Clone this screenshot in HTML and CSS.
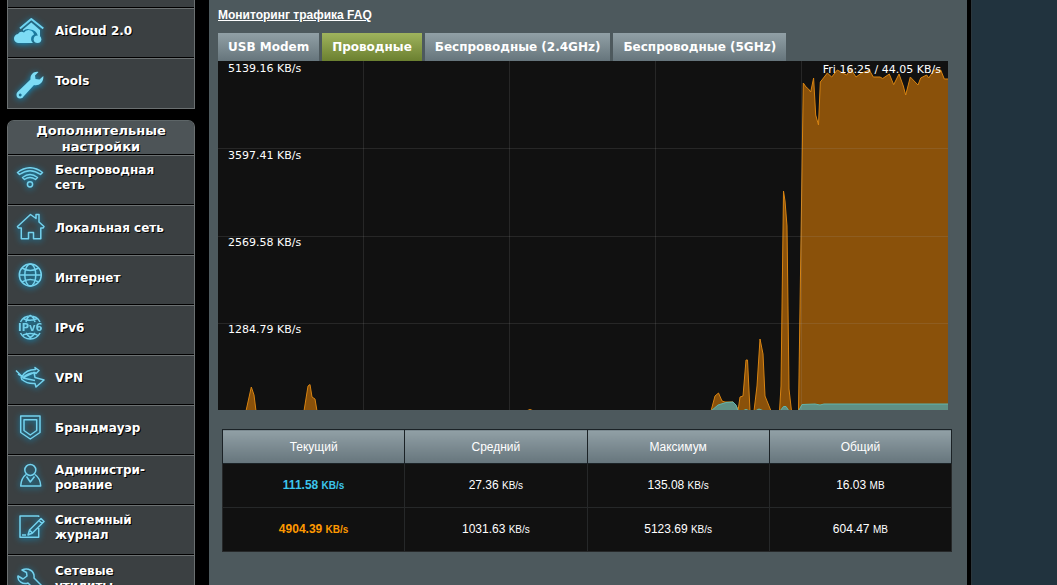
FILE: index.html
```html
<!DOCTYPE html>
<html lang="ru">
<head>
<meta charset="utf-8">
<title>Мониторинг трафика</title>
<link rel="stylesheet" href="styles.css">
</head>
<body>
<div class="frame">
  <nav class="sidebar">
    <div class="menu">
      <div class="menu-stub"></div>
      <a class="menu-item" href="#"><svg class="icon solid" viewBox="0 0 47 48"><path class="line" stroke-width="2" d="M12 19.500 23.300 10 35.300 19.500"/><path d="M15 20.500 23.300 13.500 32 21V27H30Q28 20.500 22 20.500 18.500 19 15 22Z"/><path d="M11 34A4.500 4.500 0 0 1 10 25 4.500 4.500 0 0 1 16 23.500 5.500 5.500 0 0 1 26 25.500 5 5 0 0 0 25 34Z"/><circle cx="29.500" cy="30.300" r="3.800"/></svg><span>AiCloud 2.0</span></a>
      <a class="menu-item" href="#"><svg class="icon solid" viewBox="0 0 47 48"><path fill-rule="evenodd" d="M30.500 12C26 11 22 14.500 22.500 19.500L9.500 32C7.500 34 8.500 38.500 12 38.500 14 38.500 15 37.500 15.500 36.500L26 25C31 26 36 22.500 35.300 16L31.500 19.500 27.500 19 27 15.500ZM12.200 33.600a1.400 1.400 0 1 0 .01 0Z"/></svg><span>Tools</span></a>
    </div>
    <div class="menu">
      <h2 class="menu-title">Дополнительные настройки</h2>
      <a class="menu-item" href="#"><svg class="icon" viewBox="0 0 47 48"><path d="M9.500 16.500Q22 7 34.500 16.500L32.500 18.500Q22 11 11.500 18.500Z"/><path d="M14.500 21.500Q22 15.500 29.500 21.500L27.500 23.500Q22 19.500 16.500 23.500Z"/><circle cx="22" cy="28.300" r="2.600"/></svg><span>Беспроводная сеть</span></a>
      <a class="menu-item" href="#"><svg class="icon" viewBox="0 0 47 48"><path d="M28 12.500V8.500H31V16L36 20.500 35 22H32.800V32.700H25.500V26.500H20.500V32.700H13.300V22H10.500L9.500 20.500 22.500 8.500Z"/></svg><span>Локальная сеть</span></a>
      <a class="menu-item" href="#"><svg class="icon" viewBox="0 0 47 48"><circle cx="22.300" cy="19" r="11"/><ellipse cx="22.300" cy="19" rx="5.500" ry="11"/><path d="M11.300 19H33.300M14 12Q22.300 17 30.500 12M14 26Q22.300 21 30.500 26"/></svg><span>Интернет</span></a>
      <a class="menu-item" href="#"><svg class="icon" viewBox="0 0 47 48"><path d="M12.500 16A11 11 0 0 1 32 16M18 16Q19 11 22.300 9.500 26 11 27 16M15 12.500Q22 16 29.500 12.500M12.500 27A11 11 0 0 0 32 27M18 27Q20 30 22.300 31.500 25 30 27 27M15 29Q22 26 29.500 29"/><text x="10" y="25">IPv6</text></svg><span>IPv6</span></a>
      <a class="menu-item" href="#"><svg class="icon" viewBox="0 0 47 48"><path d="M8 14.500 14 20.500Q18 13.500 27.500 13.500L27 11.500 31 14.500 28 17.500 27 16.500Q20 17 15 21.500L26 16.500 27 21.500 36 24 28 31 27 27.500Q19 28 14 23.500M15 22 27 24.500M14 24 13 20.500M10 18 17 22"/></svg><span>VPN</span></a>
      <a class="menu-item" href="#"><svg class="icon" viewBox="0 0 47 48"><path d="M12.700 10H32V26.500L22.300 33 12.700 26.500ZM16 13.800H28.700V24.500L22.300 29 16 24.500Z"/></svg><span>Брандмауэр</span></a>
      <a class="menu-item" href="#"><svg class="icon" viewBox="0 0 47 48"><circle cx="22.300" cy="14" r="5.500"/><path d="M18 18.500C14.500 21 13 25 12.700 30H32.700C32.500 25 30.500 21 27 18.500M18.500 20.500 22.300 26 26.500 20.500"/></svg><span>Администри-<br>рование</span></a>
      <a class="menu-item" href="#"><svg class="icon" viewBox="0 0 47 48"><path d="M30.700 11V10H12V31.300H30.700V22M20 29 21.500 24 33 12.500 36 15.500 24.500 27ZM31 14.500 34 17.500M21.500 24 24.500 27M14 29H18"/></svg><span>Системный<br>журнал</span></a>
      <a class="menu-item" href="#"><svg class="icon" viewBox="0 0 47 48"><path d="M14 13C20 10 27 14 26 21L34 29C38 34 32 38 28 34L20 26C15 28 9 24 10 19L15 22 19 19 18.500 15.500Z"/></svg><span>Сетевые<br>утилиты</span></a>
    </div>
  </nav>
  <main class="panel">
    <a class="faq" href="#">Мониторинг трафика FAQ</a>
    <div class="tabs">
      <button class="tab">USB Modem</button>
      <button class="tab active">Проводные</button>
      <button class="tab">Беспроводные (2.4GHz)</button>
      <button class="tab">Беспроводные (5GHz)</button>
    </div>
    <div class="chart">
      <svg class="plot" viewBox="0 0 730 349" preserveAspectRatio="none">
        <path class="rx" d="M28 350 33.300 326 36 334 38 350M86 350 90 325 92 323.500 94 336 97 338 99 350M308 350 312 348.500 316 350M493 350 497 335 500.500 332 504 340 507 341 515 341 519 346 520 350 522 336 525 335 528 299 529.500 299 532 350M536 350 539 325 542 278 545 293 547 335 553 350M561.500 350 563 325 565.500 130 567 140 569 165 571 328 573.500 350M580.500 350 584.300 89 585.300 22 588 26 590.500 28 592.700 31 595.600 17 597.700 54 600.500 64 602.300 21 604.700 18 609.300 12 613.700 16 619.300 9 624.700 12 628.700 14 632.700 8 638 16 643.700 12 651.300 9 655.300 16 662 16 664.700 17.500 671.300 13 675.700 23.700 681 13 685.300 25 687.700 34 692.300 16 700 24 702.700 17 708.700 14 710.700 17 716 9 722.700 9 726.300 18 731 18V350"/>
        <path class="tx" d="M493 350 500 344 508 341.500 515 341 518 344 520 350M524 350 528 348.500 532 350M537 350 541 348 546 350M562 350 565.500 345.500 568 345.500 571 350M580.500 350 584 343.500 597 343 602 344 606 343 731 343V350"/>
        <path class="grid" d="M145.500 0V349M291.500 0V349M437.500 0V349M583.500 0V349M0 87.500H730M0 175.500H730M0 262.500H730"/>
      </svg>
      <div class="ticks"><span>5139.16 KB/s</span><span>3597.41 KB/s</span><span>2569.58 KB/s</span><span>1284.79 KB/s</span></div>
      <div class="readout">Fri 16:25 / 44.05 KB/s</div>
    </div>
    <table class="totals">
      <thead><tr><th>Текущий</th><th>Средний</th><th>Максимум</th><th>Общий</th></tr></thead>
      <tbody>
        <tr><td class="blue">111.58 <small>KB/s</small></td><td>27.36 <small>KB/s</small></td><td>135.08 <small>KB/s</small></td><td>16.03 <small>MB</small></td></tr>
        <tr><td class="orange">4904.39 <small>KB/s</small></td><td>1031.63 <small>KB/s</small></td><td>5123.69 <small>KB/s</small></td><td>604.47 <small>MB</small></td></tr>
      </tbody>
    </table>
  </main>
</div>
</body>
</html>
```
FILE: styles.css
```css
* { box-sizing: border-box; }

body {
  margin: 0;
  height: 100vh;
  overflow: hidden;
  padding-right: 85px;
  background: #21333e;
  color: #fff;
  font-family: "DejaVu Sans", sans-serif;
  font-size: 12px;
}

.frame {
  display: flex;
  gap: 14px;
  min-height: 100vh;
  padding: 0 4px 0 7px;
  background: #000;
  border-right: 1px solid #2c383e;
}

/* Sidebar */
.sidebar {
  display: flex;
  flex-direction: column;
  gap: 11px;
  width: 188px;
  flex: none;
  height: 100vh;
}

.menu {
  border: 1px solid #6b7071;
  border-top: 0;
  background: #3b4042;
  flex: none;
}

.menu-stub { height: 8px; border-bottom: 1px solid #000; }

.menu + .menu { border-radius: 7px 7px 0 0; border-top: 1px solid #5d6567; }

.menu-title {
  margin: 0;
  padding: 2px 20px 0;
  border-bottom: 1px solid #000;
  border-radius: 6px 6px 0 0;
  background: #4d5457;
  font-size: 13px;
  line-height: 16px;
  height: 34px;
  text-align: center;
  text-shadow: 1px 1px 0 #000;
}

.menu-item {
  display: flex;
  align-items: center;
  height: 50px;
  border-top: 1px solid #6b7071;
  border-bottom: 1px solid #000;
  color: #fff;
  font-weight: bold;
  line-height: 15px;
  text-decoration: none;
  text-shadow: 1px 1px 0 #000;
}

.menu-item:last-child { border-bottom: 0; }
.menu-item span { flex: 1; padding: 0 20px 4px 0; }

.icon {
  width: 47px;
  height: 48px;
  flex: none;
  fill: none;
  stroke: #74d2ee;
  stroke-width: 1.5;
  stroke-linejoin: round;
  filter: drop-shadow(0 1px 3px #0a98d0);
}

.icon.solid { fill: #7ddcf5; stroke: none; }
.icon .line { fill: none; stroke: #6fd3f0; }
.icon text { fill: #74cfe9; stroke: none; font-size: 10px; font-weight: bold; text-shadow: none; }

/* Content */
.panel {
  flex: 1;
  padding: 8px 15px 0 9px;
  background: #4d595d;
  font-family: "Liberation Sans", Arial, sans-serif;
}

.faq {
  display: block;
  width: fit-content;
  color: #fff;
  font-weight: bold;
  line-height: 14px;
}

.tabs { display: flex; gap: 3px; margin-top: 11px; }

.tab {
  height: 28px;
  padding: 0 10px;
  border: 0;
  background: linear-gradient(#91a0a6, #66757c);
  color: #fff;
  font: bold 12px "DejaVu Sans", sans-serif;
}

.tab.active { background: linear-gradient(#9fb35d, #6b8030); }

.chart {
  position: relative;
  margin-right: 4px;
  height: 349px;
  background: #111;
  font-family: "DejaVu Sans", sans-serif;
  font-size: 11px;
  line-height: 15px;
}

.plot { display: block; width: 100%; height: 349px; }
.plot path { stroke-width: 1; vector-effect: non-scaling-stroke; }
.rx { fill: #8a510a; stroke: #d88412; }
.tx { fill: #5f9085; stroke: #5fb5ad; }
.plot .grid { fill: none; stroke: #aaa; stroke-opacity: .15; }

.ticks {
  position: absolute;
  inset: 0 auto auto 10px;
  display: grid;
  grid-auto-rows: 87px;
}

.readout { position: absolute; top: 1px; right: 7px; }

.totals {
  width: calc(100% - 4px);
  margin: 19px 0 0 4px;
  table-layout: fixed;
  border-collapse: collapse;
  border: 1px solid #1b2226;
  background: #111;
  text-align: center;
}

.totals th {
  height: 34px;
  padding: 0;
  border: 1px solid #1b2226;
  background: linear-gradient(#91a0a6, #66757c);
  font-weight: normal;
}

.totals td { height: 44px; padding: 0 0 2px; border: 1px solid #262829; }
.totals small { font-size: 10px; }
.blue { color: #3cc5ec; font-weight: bold; }
.orange { color: #f90; font-weight: bold; }
```
